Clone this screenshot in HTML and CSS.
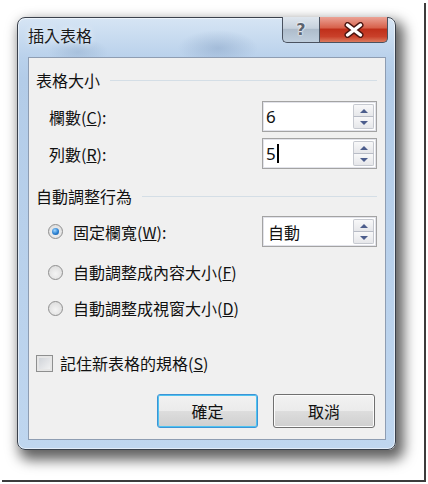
FILE: index.html
```html
<!DOCTYPE html>
<html>
	<head>
		<meta charset="utf-8">
		<link rel="stylesheet" href="styles.css">
	</head>
	<body>
		<div class="photo">
			<div class="dialog">
				<div class="titlebar">
					<span class="title">插入表格</span>
					<div class="caption-buttons">
						<div class="btn-help">?</div>
						<div class="btn-close">
							<svg width="22" height="16" viewBox="0 0 22 16">
								<path d="M4.5 3 L17.5 13 M17.5 3 L4.5 13" stroke="#4a1510" stroke-width="6" stroke-linecap="round" fill="none"/>
								<path d="M4.5 3 L17.5 13 M17.5 3 L4.5 13" stroke="#fff" stroke-width="3.4" stroke-linecap="round" fill="none"/>
							</svg>
						</div>
					</div>
				</div>
				<div class="client">
					<div class="group-head head-size"><span>表格大小</span><i class="rule"></i></div>

					<div class="field-row row-cols">
						<label class="field-label">欄數(<u>C</u>):</label>
						<div class="spin">
							<span class="spin-value">6</span>
							<div class="spin-arrows">
								<div class="arrow up"></div>
								<div class="arrow down"></div>
							</div>
						</div>
					</div>

					<div class="field-row row-rows">
						<label class="field-label">列數(<u>R</u>):</label>
						<div class="spin">
							<span class="spin-value">5<i class="caret"></i></span>
							<div class="spin-arrows">
								<div class="arrow up"></div>
								<div class="arrow down"></div>
							</div>
						</div>
					</div>

					<div class="group-head head-fit"><span>自動調整行為</span><i class="rule"></i></div>

					<div class="field-row row-fixed">
						<label class="radio-label"><span class="radio checked"></span>固定欄寬(<u>W</u>):</label>
						<div class="spin">
							<span class="spin-value auto">自動</span>
							<div class="spin-arrows">
								<div class="arrow up"></div>
								<div class="arrow down"></div>
							</div>
						</div>
					</div>

					<div class="option-row row-content">
						<label class="radio-label"><span class="radio"></span>自動調整成內容大小(<u>F</u>)</label>
					</div>

					<div class="option-row row-window">
						<label class="radio-label"><span class="radio"></span>自動調整成視窗大小(<u>D</u>)</label>
					</div>

					<div class="option-row row-remember">
						<label class="check-label"><span class="checkbox"></span>記住新表格的規格(<u>S</u>)</label>
					</div>

					<div class="button-row">
						<button class="push default">確定</button>
						<button class="push">取消</button>
					</div>
				</div>
			</div>
		</div>
	</body>
</html>
```

FILE: styles.css
```css
body {
	margin: 0;
	background: #fff;
	font-family: "Noto Sans CJK TC", "Noto Sans", sans-serif;
	font-size: 16px;
	color: #111;
}

.photo {
	margin: 3px 0 0 2px;
	width: 407px;
	height: 463px;
	padding: 14px 0 0 15px;
	border-right: 2px solid #3c3c3c;
	border-bottom: 2px solid #3c3c3c;
	background: #fff;
}

/* window frame */
.dialog {
	width: 358px;
	padding: 0 9px 9px 10px;
	border: 1px solid #3a414c;
	border-radius: 8px;
	background:
		radial-gradient(ellipse 40px 18px at 200px 30px, rgba(110, 140, 180, .35), transparent),
		radial-gradient(ellipse 30px 14px at 60px 34px, rgba(120, 150, 185, .3), transparent),
		linear-gradient(to bottom, #d6e5f4 0, #b9d1eb 40px, #b3cce8 60px, #bfd6ef 100%);
	box-shadow: 5px 7px 13px 3px rgba(0, 0, 0, .62), inset 0 0 0 1px rgba(255, 255, 255, .55);
}

.titlebar {
	display: flex;
	justify-content: space-between;
	align-items: flex-start;
	height: 39px;
}

.title {
	padding-top: 7px;
	line-height: 20px;
	color: #1a1a1a;
	text-shadow: 0 0 6px rgba(255, 255, 255, .9);
}

.caption-buttons {
	display: flex;
	margin: -1px -2px 0 0;
}

.btn-help,
.btn-close {
	height: 26px;
	box-sizing: border-box;
	display: flex;
	align-items: center;
	justify-content: center;
	border: 1px solid #4a5260;
	border-top: none;
}

.btn-help {
	width: 37px;
	border-right: none;
	border-radius: 0 0 0 5px;
	background: linear-gradient(to bottom, #dfe6ee 0, #c6d1dd 45%, #aebccb 50%, #bfcedd 100%);
	font-family: "DejaVu Sans", sans-serif;
	font-weight: bold;
	font-size: 16px;
	color: #5c6470;
	text-shadow: 0 0 2px #fff, 0 0 2px #fff;
}

.btn-close {
	width: 69px;
	border-radius: 0 0 5px 0;
	background: linear-gradient(to bottom, #eba396 0, #d8634d 42%, #c0301b 50%, #c9402a 78%, #dc7a5e 100%);
}

/* client area */
.client {
	padding: 0 8px 11px 7px;
	border: 1px solid #8e9db2;
	background: #f0f0f0;
}

.group-head {
	display: flex;
	align-items: center;
	height: 20px;
	line-height: 20px;
}

.group-head .rule {
	flex: 1;
	height: 1px;
	margin-left: 10px;
	background: #d4dee6;
}

.head-size {
	margin-top: 12px;
}

.head-fit {
	margin-top: 17px;
}

.field-row {
	display: flex;
	align-items: center;
	justify-content: space-between;
	height: 31px;
}

.row-cols {
	margin-top: 11px;
}

.row-rows {
	margin-top: 6px;
}

.row-fixed {
	margin-top: 10px;
}

.field-label {
	margin-left: 13px;
}

.spin {
	display: flex;
	align-items: center;
	justify-content: space-between;
	width: 115px;
	height: 31px;
	box-sizing: border-box;
	padding: 2px 2px 2px 3px;
	border: 1px solid #a3a3a3;
	box-shadow: inset 0 0 0 1px #e2e3ea;
	background: #fff;
}

.spin-value {
	display: flex;
	align-items: center;
	font-family: "Noto Sans", sans-serif;
	font-size: 17px;
	color: #111;
}

.spin-value.auto {
	font-family: "Noto Sans CJK TC", sans-serif;
	font-size: 16px;
	margin-left: 2px;
}

.caret {
	display: inline-block;
	width: 2px;
	height: 19px;
	margin-left: 1px;
	background: #000;
}

.spin-arrows {
	display: flex;
	flex-direction: column;
	width: 21px;
	height: 25px;
}

.arrow {
	flex: 1;
	display: flex;
	align-items: center;
	justify-content: center;
	border: 1px solid #c6c9d0;
	background: linear-gradient(to bottom, #f8f8f9, #e6e7ea);
}

.arrow.up {
	border-radius: 2px 2px 0 0;
	border-bottom-color: #b8bcc6;
}

.arrow.down {
	border-top: none;
	border-radius: 0 0 2px 2px;
}

.arrow.up::after,
.arrow.down::after {
	content: "";
	width: 0;
	height: 0;
	border-left: 4px solid transparent;
	border-right: 4px solid transparent;
}

.arrow.up::after {
	border-bottom: 4px solid #4c5d8c;
}

.arrow.down::after {
	border-top: 4px solid #4c5d8c;
}

.option-row {
	display: flex;
	align-items: center;
	height: 24px;
}

.row-content {
	margin-top: 13px;
}

.row-window {
	margin-top: 12px;
}

.row-remember {
	margin-top: 31px;
}

.radio-label {
	display: flex;
	align-items: center;
	margin-left: 12px;
}

.radio {
	width: 15px;
	height: 15px;
	box-sizing: border-box;
	margin-right: 10px;
	border: 1px solid #8f8f8f;
	border-radius: 50%;
	background: radial-gradient(circle at 50% 60%, #f4f4f4 0, #d8d8d8 100%);
	display: flex;
	align-items: center;
	justify-content: center;
}

.radio.checked::after {
	content: "";
	width: 7px;
	height: 7px;
	border-radius: 50%;
	background: radial-gradient(circle at 40% 35%, #9fd6ff 0, #2a7fd0 55%, #0f4f96 100%);
}

.check-label {
	display: flex;
	align-items: center;
}

.checkbox {
	width: 17px;
	height: 17px;
	box-sizing: border-box;
	margin-right: 7px;
	border: 1px solid #8e8f8f;
	box-shadow: inset 0 0 0 2px #e6e6e6;
	background: linear-gradient(135deg, #cbcfd5, #f6f6f6);
}

.button-row {
	display: flex;
	justify-content: flex-end;
	gap: 15px;
	margin-top: 19px;
	padding-right: 2px;
}

.push {
	width: 102px;
	height: 34px;
	box-sizing: border-box;
	border: 1px solid #707070;
	border-radius: 3px;
	background: linear-gradient(to bottom, #f2f2f2 0, #ebebeb 50%, #dddddd 51%, #cfcfcf 100%);
	box-shadow: inset 0 0 0 1px #fcfcfc;
	font-family: "Noto Sans CJK TC", sans-serif;
	font-size: 16px;
	color: #111;
	padding: 0;
}

.push.default {
	width: 101px;
	border-color: #3c94d6;
	box-shadow: inset 0 0 0 1px #4fc3f0;
}
```
